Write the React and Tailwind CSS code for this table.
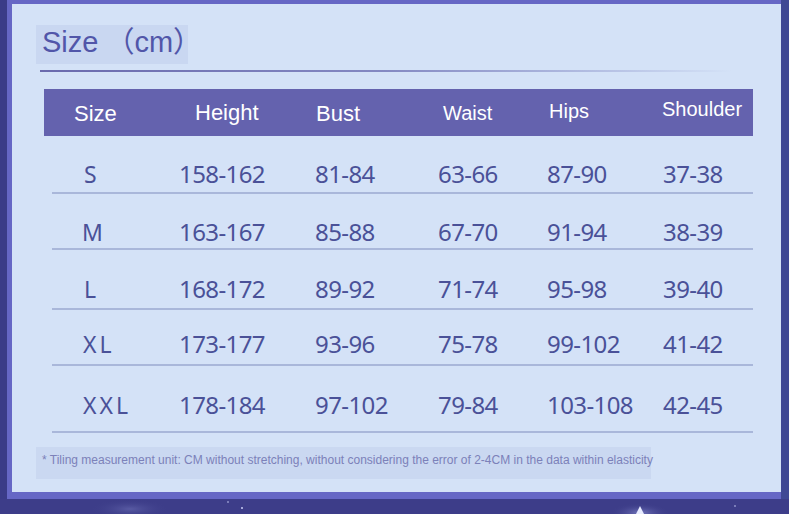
import React from "react";

const rows = [
  { s: "S", v: ["158-162", "81-84", "63-66", "87-90", "37-38"] },
  { s: "M", v: ["163-167", "85-88", "67-70", "91-94", "38-39"] },
  { s: "L", v: ["168-172", "89-92", "71-74", "95-98", "39-40"] },
  { s: "XL", v: ["173-177", "93-96", "75-78", "99-102", "41-42"] },
  { s: "XXL", v: ["178-184", "97-102", "79-84", "103-108", "42-45"] },
];

const rowHeights = ["h-[58px] pb-[4px]", "h-[56px] pb-[2px]", "h-[60px] pb-[5px]", "h-[56px] pb-[6px]", "h-[67px] pb-[12px]"];
const sizePad = ["pl-[32px]", "pl-[30px]", "pl-[32px]", "pl-[31px]", "pl-[31px]"];
const cellW = ["w-[136px]", "w-[123px]", "w-[109px]", "w-[116px]", "w-[90px]"];

export default function App() {
  return (
    <div className="w-[789px] h-[514px] bg-[#3b3c88] overflow-hidden flex flex-col">
      <div className="flex">
        <div className="w-[7px] shrink-0" />
        <div className="w-[774px] h-[499px] bg-[#6667c5] pl-[5px] pt-[4px] pb-[7px] shrink-0">
          <div
            className="w-[769px] h-[488px] bg-[#d4e2f7] flex flex-col"
            style={{ fontFamily: '"Liberation Sans", Arial, sans-serif' }}
          >
            {/* Title */}
            <div className="mt-[21px] ml-[24px] w-[152px] h-[39px] bg-[#c9d7f1] flex items-center pl-[6px] pb-[7px]">
              <span className="text-[29px] leading-none text-[#5156a9] whitespace-nowrap">
                Size
                <span
                  className="ml-[7px]"
                  style={{ fontFamily: '"Noto Sans CJK SC", "Noto Sans CJK JP", sans-serif' }}
                >
                  （
                </span>
                cm
                <span style={{ fontFamily: '"Noto Sans CJK SC", "Noto Sans CJK JP", sans-serif' }}>）</span>
              </span>
            </div>
            {/* underline */}
            <div className="mt-[6px] ml-[28px] w-[692px] h-[2px] bg-gradient-to-r from-[#6a6aad] via-[#8489c2] to-[#d4e2f7]" />
            {/* header */}
            <div className="mt-[17px] ml-[32px] w-[709px] h-[47px] bg-[#6462ae] flex text-white">
              <div className="w-[151px] pl-[30px] flex items-center pt-[1px] text-[22px]">Size</div>
              <div className="w-[121px] flex items-center text-[22px] pb-[1px]">Height</div>
              <div className="w-[127px] flex items-center text-[22px] pt-[1px]">Bust</div>
              <div className="w-[106px] flex items-center text-[20px] pt-[1px]">Waist</div>
              <div className="w-[113px] flex items-center text-[20px] pb-[4px]">Hips</div>
              <div className="flex-1 flex items-center text-[20px] pb-[8px]">Shoulder</div>
            </div>
            {/* rows */}
            <div
              className="ml-[40px] w-[701px] flex flex-col text-[#4a5198]"
              style={{ fontFamily: '"Noto Sans", sans-serif' }}
            >
              {rows.map((r, i) => (
                <div
                  key={r.s}
                  className={`flex items-end border-b-2 border-[#a9b7da] box-border ${rowHeights[i]}`}
                >
                  <div className={`w-[127px] ${sizePad[i]} text-[23px] leading-[28px] tracking-[3px]`}>{r.s}</div>
                  {r.v.map((t, j) => (
                    <div key={j} className={`${cellW[j]} text-[24px] leading-[28px] tracking-[-0.6px]`}>
                      {t}
                    </div>
                  ))}
                </div>
              ))}
            </div>
            {/* footnote */}
            <div className="mt-[14px] ml-[24px] w-[615px] h-[32px] bg-[#cad8f1] flex items-center pl-[6px] pb-[7px]">
              <span className="text-[12px] leading-none text-[#7c81b9] whitespace-nowrap">
                * Tiling measurement unit: CM without stretching, without considering the error of 2-4CM in the data within elasticity
              </span>
            </div>
          </div>
        </div>
        <div className="w-[8px] h-[499px] bg-[#3f4894] shrink-0" />
      </div>
      <svg width="789" height="15" className="block">
        <defs>
          <radialGradient id="g1" cx="0.5" cy="0.5" r="0.5">
            <stop offset="0" stopColor="#9aa0e0" stopOpacity="0.6" />
            <stop offset="1" stopColor="#3b3c88" stopOpacity="0" />
          </radialGradient>
        </defs>
        <rect x="0" y="0" width="789" height="15" fill="#3d3d89" />
        <ellipse cx="130" cy="10" rx="40" ry="10" fill="url(#g1)" opacity="0.5" />
        <ellipse cx="640" cy="14" rx="30" ry="10" fill="url(#g1)" />
        <polygon points="636,15 640,7 644,15" fill="#e8ecff" />
        <circle cx="242" cy="9" r="1" fill="#c9cdf5" />
        <circle cx="228" cy="3" r="0.8" fill="#c9cdf5" />
        <circle cx="735" cy="7" r="0.8" fill="#c9cdf5" />
      </svg>
    </div>
  );
}
